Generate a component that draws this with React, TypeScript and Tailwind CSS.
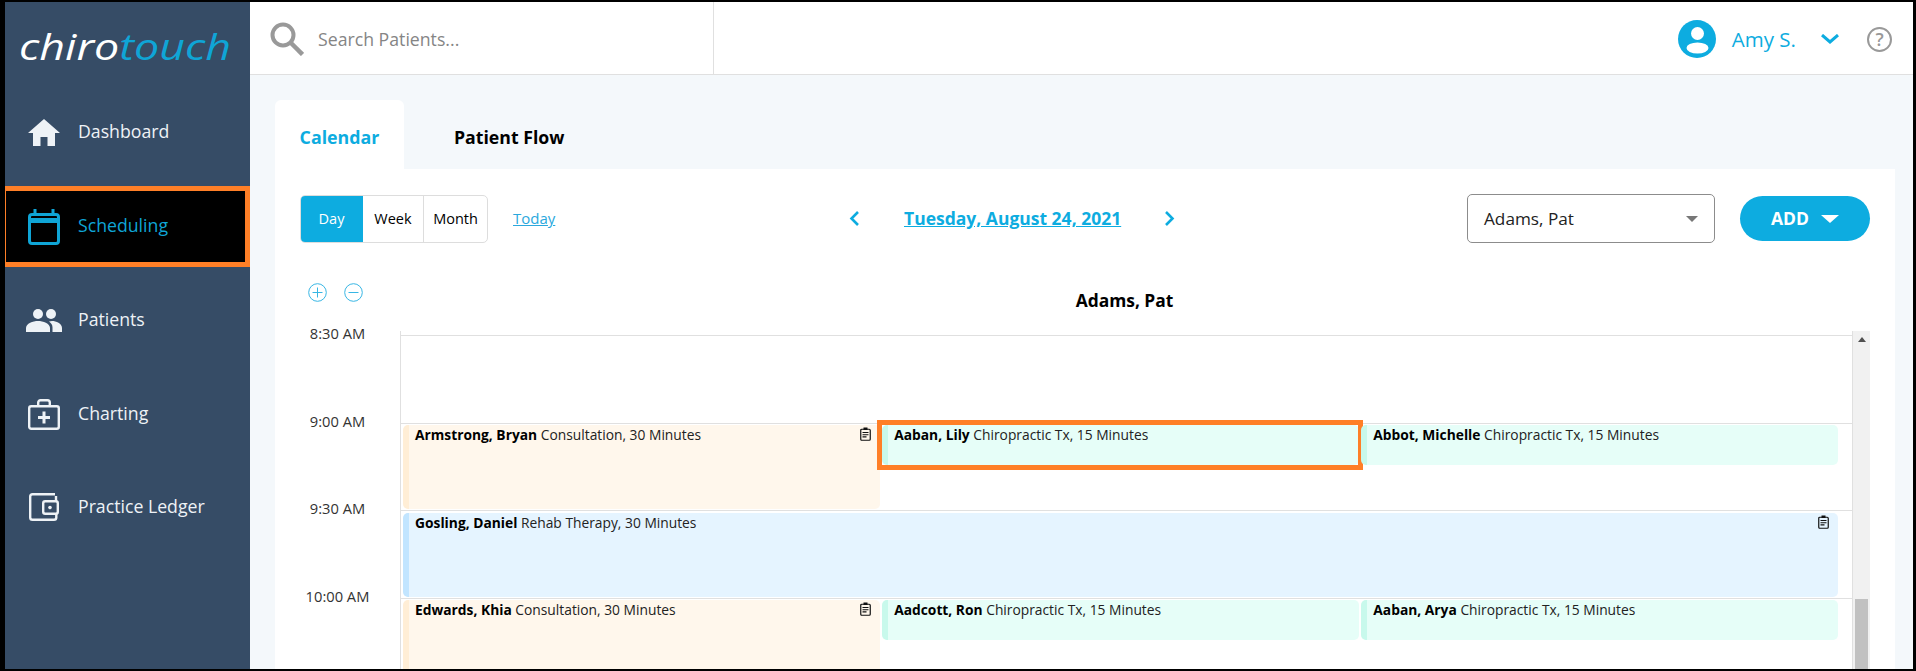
import React from "react";

const sans = "font-['Open_Sans',sans-serif]";

function Home() {
  return (
    <svg width="32" height="27" viewBox="0 0 32 27" fill="currentColor">
      <path d="M16 0 L32 14 L27 14 L27 27 L19.5 27 L19.5 18 L12.5 18 L12.5 27 L5 27 L5 14 L0 14 Z" />
    </svg>
  );
}
function CalendarIcon() {
  return (
    <svg width="32" height="36" viewBox="0 0 32 36" fill="none" stroke="currentColor">
      <rect x="1.5" y="5.5" width="29" height="29" rx="2.5" strokeWidth="3" />
      <path d="M1.5 11.5 H30.5" strokeWidth="5" />
      <path d="M7 0 V6 M25 0 V6" strokeWidth="3" />
    </svg>
  );
}
function People() {
  return (
    <svg width="36" height="23" viewBox="0 0 36 23" fill="currentColor">
      <circle cx="12" cy="5" r="5" />
      <circle cx="25" cy="5" r="5" />
      <path d="M0 23 V19 C0 14.5 7 12 12 12 C17 12 24 14.5 24 19 V23 Z" />
      <path d="M26.5 23 V18.5 C26.5 16 25 14 23 12.6 C24 12.2 25 12 26 12 C30 12 36 14.5 36 19 V23 Z" />
    </svg>
  );
}
function Briefcase() {
  return (
    <svg width="32" height="31" viewBox="0 0 32 31" fill="none" stroke="currentColor" strokeWidth="2.4">
      <rect x="1.2" y="7.2" width="29.6" height="22.6" rx="2" />
      <path d="M10.2 7 V3.5 C10.2 2 11.2 1.2 12.5 1.2 H19.5 C20.8 1.2 21.8 2 21.8 3.5 V7" />
      <path d="M16 12.5 V24.5 M10 18.5 H22" strokeWidth="3" />
    </svg>
  );
}
function Wallet() {
  return (
    <svg width="30" height="28" viewBox="0 0 30 28" fill="none" stroke="currentColor" strokeWidth="2.4">
      <path d="M26 1.2 H3.5 C2 1.2 1.2 2 1.2 3.5 V24.5 C1.2 26 2 26.8 3.5 26.8 H25 C26.5 26.8 27.3 26 27.3 24.5 V20" />
      <path d="M27 8 V3" />
      <rect x="14.2" y="8.2" width="14.6" height="12.6" rx="2" />
      <circle cx="21" cy="14.5" r="1.8" fill="currentColor" stroke="none" />
    </svg>
  );
}
function Clipboard() {
  return (
    <svg width="11" height="14" viewBox="0 0 11 14" fill="none" stroke="#111">
      <rect x="0.75" y="2.25" width="9.5" height="11" rx="1" strokeWidth="1.2" />
      <rect x="3.5" y="0.5" width="4" height="2.5" fill="#111" stroke="none" />
      <path d="M2.5 5.5 H8.5 M2.5 7.7 H8.5 M2.5 9.9 H6.5" strokeWidth="1.1" />
    </svg>
  );
}

type Tone = "orange" | "blue" | "teal";
const tones: Record<Tone, string> = {
  orange: "bg-[#fff7ec] border-[#ffeed6]",
  blue: "bg-[#e5f4ff] border-[#c2e5ff]",
  teal: "bg-[#e6fef8] border-[#c8f9ec]",
};

function Event(props: {
  name: string;
  detail: string;
  tone: Tone;
  note?: boolean;
  wide?: boolean;
  short?: boolean;
  marked?: boolean;
}) {
  const { name, detail, tone, note, wide, short, marked } = props;
  return (
    <div
      className={`relative flex justify-between rounded-[5px] border-l-[6px] pl-[6px] pr-[9px] pt-[1px] text-[13.8px] leading-[18px] text-[#222] ${tones[tone]} ${wide ? "col-span-3" : ""} ${short ? "h-[40px]" : "h-[84px]"}`}
    >
      <span className="whitespace-nowrap">
        <b className="font-bold text-black">{name}</b> {detail}
      </span>
      {note && (
        <span className="mt-[1px]">
          <Clipboard />
        </span>
      )}
      {marked && (
        <span className="absolute -bottom-[5px] -left-[11px] -right-[4px] -top-[5px] border-[5px] border-[#ff7f27]" />
      )}
    </div>
  );
}

function Row(props: { children?: React.ReactNode }) {
  return (
    <div className="grid h-[87.5px] grid-cols-3 items-start gap-x-[2.5px] border-t border-[#e0e0e0] pl-[2px] pr-[14px] pt-[1.5px]">
      {props.children}
    </div>
  );
}

function NavItem(props: { icon: React.ReactNode; label: string; active?: boolean; lift?: boolean }) {
  const { icon, label, active, lift } = props;
  return (
    <div
      className={
        active
          ? "relative flex h-[81px] items-center gap-[16px] border-y-[5px] border-l border-r-[5px] border-[#ff7f27] bg-black pl-[20px] text-[#0fa5d6]"
          : `flex h-[81px] items-center gap-[16px] pl-[21px] text-[#eef2f6] ${lift ? "pb-[3px]" : ""}`
      }
    >
      {active && <span className="absolute -left-[5px] -top-[5px] -bottom-[5px] w-px bg-[#ff7f27]" />}
      <span className="flex w-[36px] justify-center">{icon}</span>
      <span className="-mt-[2px] text-[17.7px]">{label}</span>
    </div>
  );
}

export default function App() {
  return (
    <div
      className={`flex h-[671px] w-[1916px] overflow-hidden border-b-2 border-l-[5px] border-r-[3px] border-t-2 border-black ${sans} text-[14px] text-[#222]`}
    >
      <aside className="flex w-[245px] shrink-0 flex-col bg-[#364c66]">
        <div className="flex h-[90px] items-start pl-[14px] pt-[19px]">
          <span className="origin-left scale-x-[1.21] text-[37px] font-normal italic leading-[50px]">
            <span className="text-white">chiro</span>
            <span className="text-[#0fa5d6]">touch</span>
          </span>
        </div>
        <nav className="flex flex-col gap-[13px]">
          <NavItem icon={<Home />} label="Dashboard" />
          <NavItem icon={<CalendarIcon />} label="Scheduling" active />
          <NavItem icon={<People />} label="Patients" />
          <NavItem icon={<Briefcase />} label="Charting" />
          <NavItem icon={<Wallet />} label="Practice Ledger" lift />
        </nav>
      </aside>

      <div className="flex min-w-0 flex-1 flex-col bg-[#f4f8fb]">
        <header className="flex h-[73px] shrink-0 items-stretch border-b border-[#e0e0e0] bg-white">
          <div className="flex w-[464px] items-center gap-[14px] border-r border-[#e0e0e0] pl-[20px] pt-[2px]">
            <svg width="34" height="34" viewBox="0 0 34 34" fill="none" stroke="#999" strokeWidth="4">
              <circle cx="13" cy="13" r="10.5" />
              <path d="M21 21 L32.5 32.5" strokeWidth="4.5" />
            </svg>
            <span className="text-[17.7px] text-[#858585]">Search Patients...</span>
          </div>
          <div className="ml-auto flex items-center pr-[21px] pt-[2px]">
            <svg width="38" height="38" viewBox="0 0 38 38">
              <circle cx="19" cy="19" r="19" fill="#0dace0" />
              <circle cx="19.5" cy="13.5" r="6.5" fill="#fff" />
              <ellipse cx="19.5" cy="28" rx="11" ry="5.5" fill="#fff" />
            </svg>
            <span className="ml-[16px] text-[20.5px] text-[#0dace0]">Amy S.</span>
            <svg className="ml-[25px]" width="18" height="10" viewBox="0 0 18 10" fill="none" stroke="#0dace0" strokeWidth="3">
              <path d="M1 1 L9 8 L17 1" />
            </svg>
            <span className="ml-[28px] flex h-[25px] w-[25px] items-center justify-center rounded-full border-2 border-[#999] text-[18px] font-semibold leading-none text-[#999]">
              ?
            </span>
          </div>
        </header>

        <main className="flex min-h-0 flex-1 flex-col pl-[25px] pr-[18px] pt-[25px]">
          <div className="flex h-[69px] shrink-0 items-stretch">
            <div className="flex w-[129px] items-center justify-center rounded-t-[6px] bg-white pt-[6px] text-[17.8px] font-bold text-[#0dace0]">
              Calendar
            </div>
            <div className="flex items-center pl-[50px] pt-[6px] text-[17.7px] font-bold text-black">Patient Flow</div>
          </div>

          <section className="min-h-0 flex-1 bg-white pl-[25px] pr-[25px] pt-[25px]">
            <div className="flex h-[49px] items-center">
              <div className="flex w-[547px] items-center">
                <div className="flex h-[48px] overflow-hidden rounded-[5px] border border-[#dddddd] text-[14.5px]">
                  <span className="-my-px -ml-px flex w-[63px] items-center justify-center bg-[#0dace0] text-white">Day</span>
                  <span className="flex w-[61px] items-center justify-center border-r border-[#dddddd] text-black">Week</span>
                  <span className="flex w-[63px] items-center justify-center text-black">Month</span>
                </div>
                <span className="ml-[25px] text-[15px] text-[#2ba8dd] underline">Today</span>
              </div>
              <svg width="11" height="15" viewBox="0 0 11 15" fill="none" stroke="#0dace0" strokeWidth="2.6" className="ml-[2px]">
                <path d="M9 1 L2.5 7.5 L9 14" />
              </svg>
              <span className="ml-[44px] text-[17.5px] font-bold text-[#0dace0] underline">Tuesday, August 24, 2021</span>
              <svg width="11" height="15" viewBox="0 0 11 15" fill="none" stroke="#0dace0" strokeWidth="2.6" className="ml-[43px]">
                <path d="M2 1 L8.5 7.5 L2 14" />
              </svg>
              <div className="ml-auto flex h-[49px] w-[248px] items-center justify-between rounded-[5px] border border-[#8c8c8c] pl-[16px] pr-[16px] text-[17.2px] text-[#222]">
                Adams, Pat
                <span className="h-0 w-0 border-x-[6px] border-t-[6px] border-x-transparent border-t-[#777]" />
              </div>
              <div className="ml-[25px] flex h-[45px] w-[130px] items-center justify-center gap-[12px] rounded-full bg-[#0dace0] text-[17.5px] font-bold text-white">
                ADD
                <span className="h-0 w-0 border-x-[9px] border-t-[8px] border-x-transparent border-t-white" />
              </div>
            </div>

            <div className="flex h-[81px]">
              <div className="flex w-[100px] shrink-0 gap-[17px] pl-[8px] pt-[40px] text-[#38b6e4]">
                <svg width="19" height="19" viewBox="0 0 19 19" fill="none" stroke="currentColor" strokeWidth="1">
                  <circle cx="9.5" cy="9.5" r="8.8" />
                  <path d="M9.5 4.5 V14.5 M4.5 9.5 H14.5" />
                </svg>
                <svg width="19" height="19" viewBox="0 0 19 19" fill="none" stroke="currentColor" strokeWidth="1">
                  <circle cx="9.5" cy="9.5" r="8.8" />
                  <path d="M4.5 9.5 H14.5" />
                </svg>
              </div>
              <div className="flex-1 pr-[21px] pt-[45px] text-center text-[17.4px] font-bold leading-[24px] text-black">Adams, Pat</div>
            </div>

            <div className="flex items-start">
              <div className="-mt-[1px] w-[75px] shrink-0 text-center text-[14.7px] leading-[20px] text-[#333]">
                <div className="h-[87.5px]">8:30 AM</div>
                <div className="h-[87.5px]">9:00 AM</div>
                <div className="h-[87.5px]">9:30 AM</div>
                <div className="h-[87.5px]">10:00 AM</div>
              </div>
              <div className="ml-[25px] mt-[7px] flex flex-1">
                <div className="w-[1453px] shrink-0 border-x border-[#e0e0e0] pt-[4px]">
                  <Row />
                  <Row>
                    <Event name="Armstrong, Bryan" detail="Consultation, 30 Minutes" tone="orange" note />
                    <Event name="Aaban, Lily" detail="Chiropractic Tx, 15 Minutes" tone="teal" short marked />
                    <Event name="Abbot, Michelle" detail="Chiropractic Tx, 15 Minutes" tone="teal" short />
                  </Row>
                  <Row>
                    <Event name="Gosling, Daniel" detail="Rehab Therapy, 30 Minutes" tone="blue" note wide />
                  </Row>
                  <Row>
                    <Event name="Edwards, Khia" detail="Consultation, 30 Minutes" tone="orange" note />
                    <Event name="Aadcott, Ron" detail="Chiropractic Tx, 15 Minutes" tone="teal" short />
                    <Event name="Aaban, Arya" detail="Chiropractic Tx, 15 Minutes" tone="teal" short />
                  </Row>
                </div>
                <div className="flex h-[338px] w-[17px] shrink-0 flex-col items-center bg-[#f1f1f1] pt-[6px]">
                  <span className="h-0 w-0 border-x-[4px] border-b-[5px] border-x-transparent border-b-[#505050]" />
                  <span className="mt-[257px] h-[80px] w-[13px] shrink-0 bg-[#c1c1c1]" />
                </div>
              </div>
            </div>
          </section>
        </main>
      </div>
    </div>
  );
}
